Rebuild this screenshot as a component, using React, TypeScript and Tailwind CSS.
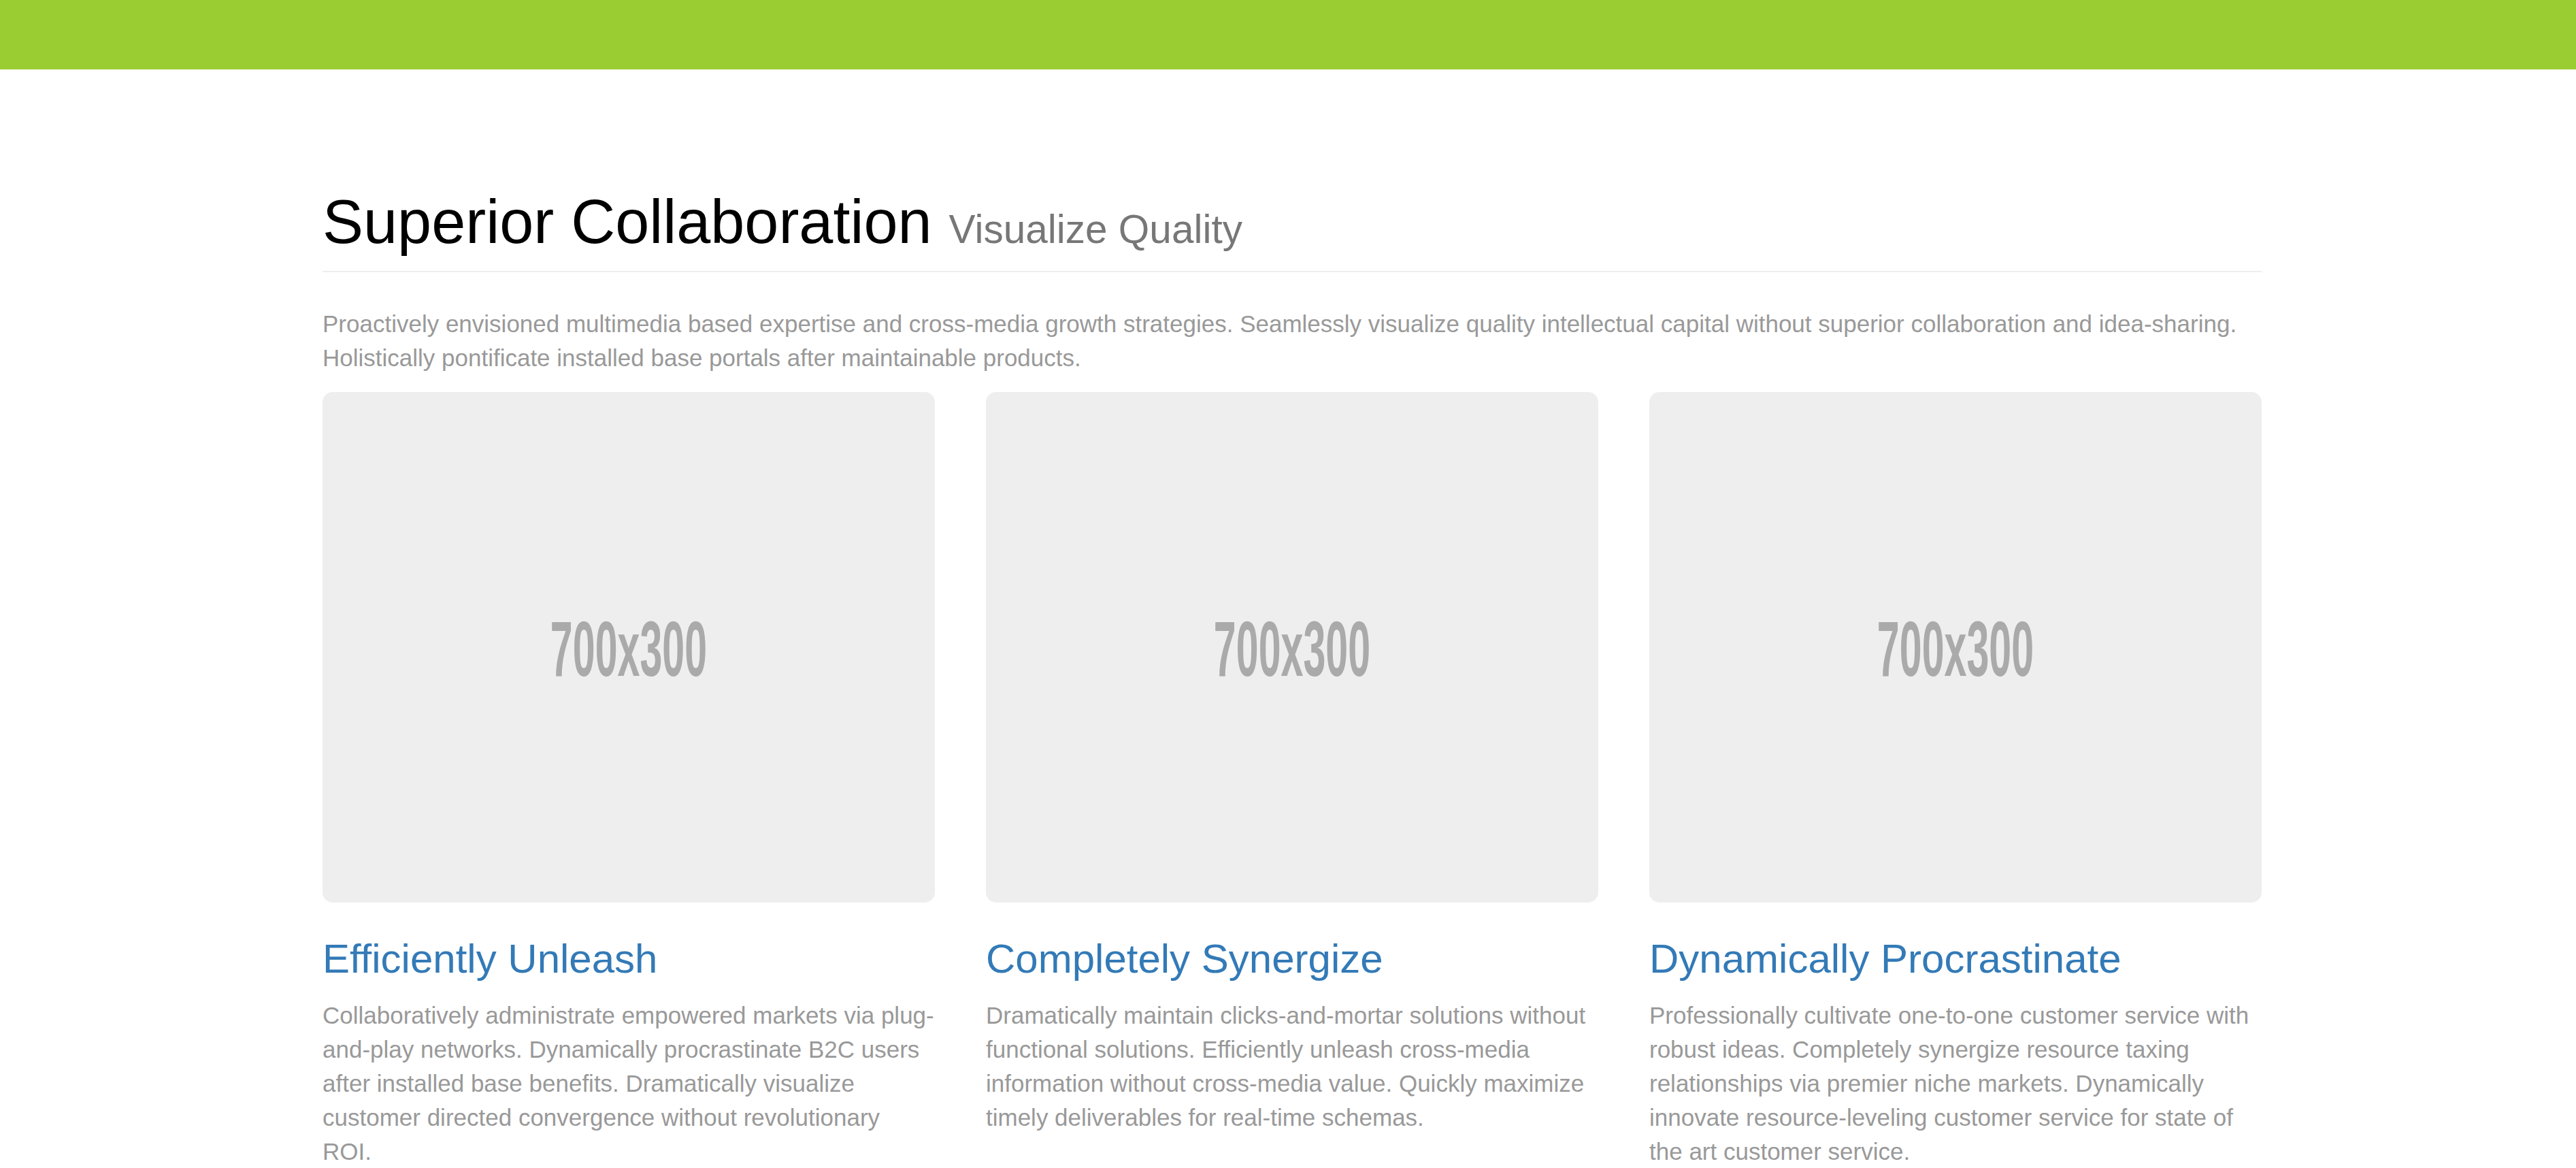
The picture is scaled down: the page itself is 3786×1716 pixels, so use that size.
import React from "react";

const cards = [
  {
    title: "Efficiently Unleash",
    text: "Collaboratively administrate empowered markets via plug-and-play networks. Dynamically procrastinate B2C users after installed base benefits. Dramatically visualize customer directed convergence without revolutionary ROI.",
  },
  {
    title: "Completely Synergize",
    text: "Dramatically maintain clicks-and-mortar solutions without functional solutions. Efficiently unleash cross-media information without cross-media value. Quickly maximize timely deliverables for real-time schemas.",
  },
  {
    title: "Dynamically Procrastinate",
    text: "Professionally cultivate one-to-one customer service with robust ideas. Completely synergize resource taxing relationships via premier niche markets. Dynamically innovate resource-leveling customer service for state of the art customer service.",
  },
];

function Placeholder() {
  return (
    <div className="w-[900px] h-[750px] rounded-[15px] bg-[#eeeeee] overflow-hidden">
      <svg viewBox="0 0 700 300" preserveAspectRatio="none" className="block w-full h-full">
        <text
          x="350"
          y="167"
          textAnchor="middle"
          fontSize="46"
          fontWeight="700"
          fill="#aaaaaa"
          fontFamily="'Liberation Sans', Arial, sans-serif"
        >
          700x300
        </text>
      </svg>
    </div>
  );
}

export default function App() {
  return (
    <div className="min-h-[1716px] bg-white font-['Liberation_Sans',Arial,sans-serif] text-[#333]">
      <div className="h-[102px] bg-[#9acd32]" />
      <div className="w-[2850px] ml-[474px]">
        <h1 className="mt-[175px] text-[90px] leading-[1.1] font-normal text-black pb-[22px] border-b-2 border-[#eeeeee]">
          Superior Collaboration{" "}
          <small className="text-[58.5px] leading-[1.1] font-normal text-[#777777]">Visualize Quality</small>
        </h1>
        <p className="mt-[51px] mb-[25px] text-[35px] leading-[50px] text-[#999999]">
          Proactively envisioned multimedia based expertise and cross-media growth strategies. Seamlessly visualize quality intellectual capital without superior collaboration and idea-sharing. Holistically pontificate installed base portals after maintainable products.
        </p>
        <div className="grid grid-cols-3 gap-[75px]">
          {cards.map((c) => (
            <div key={c.title} className="flex flex-col">
              <Placeholder />
              <h3 className="mt-[50px] text-[60px] leading-[66px] font-normal text-[#337ab7]">{c.title}</h3>
              <p className="mt-[25px] text-[35px] leading-[50px] text-[#999999]">{c.text}</p>
            </div>
          ))}
        </div>
      </div>
    </div>
  );
}
